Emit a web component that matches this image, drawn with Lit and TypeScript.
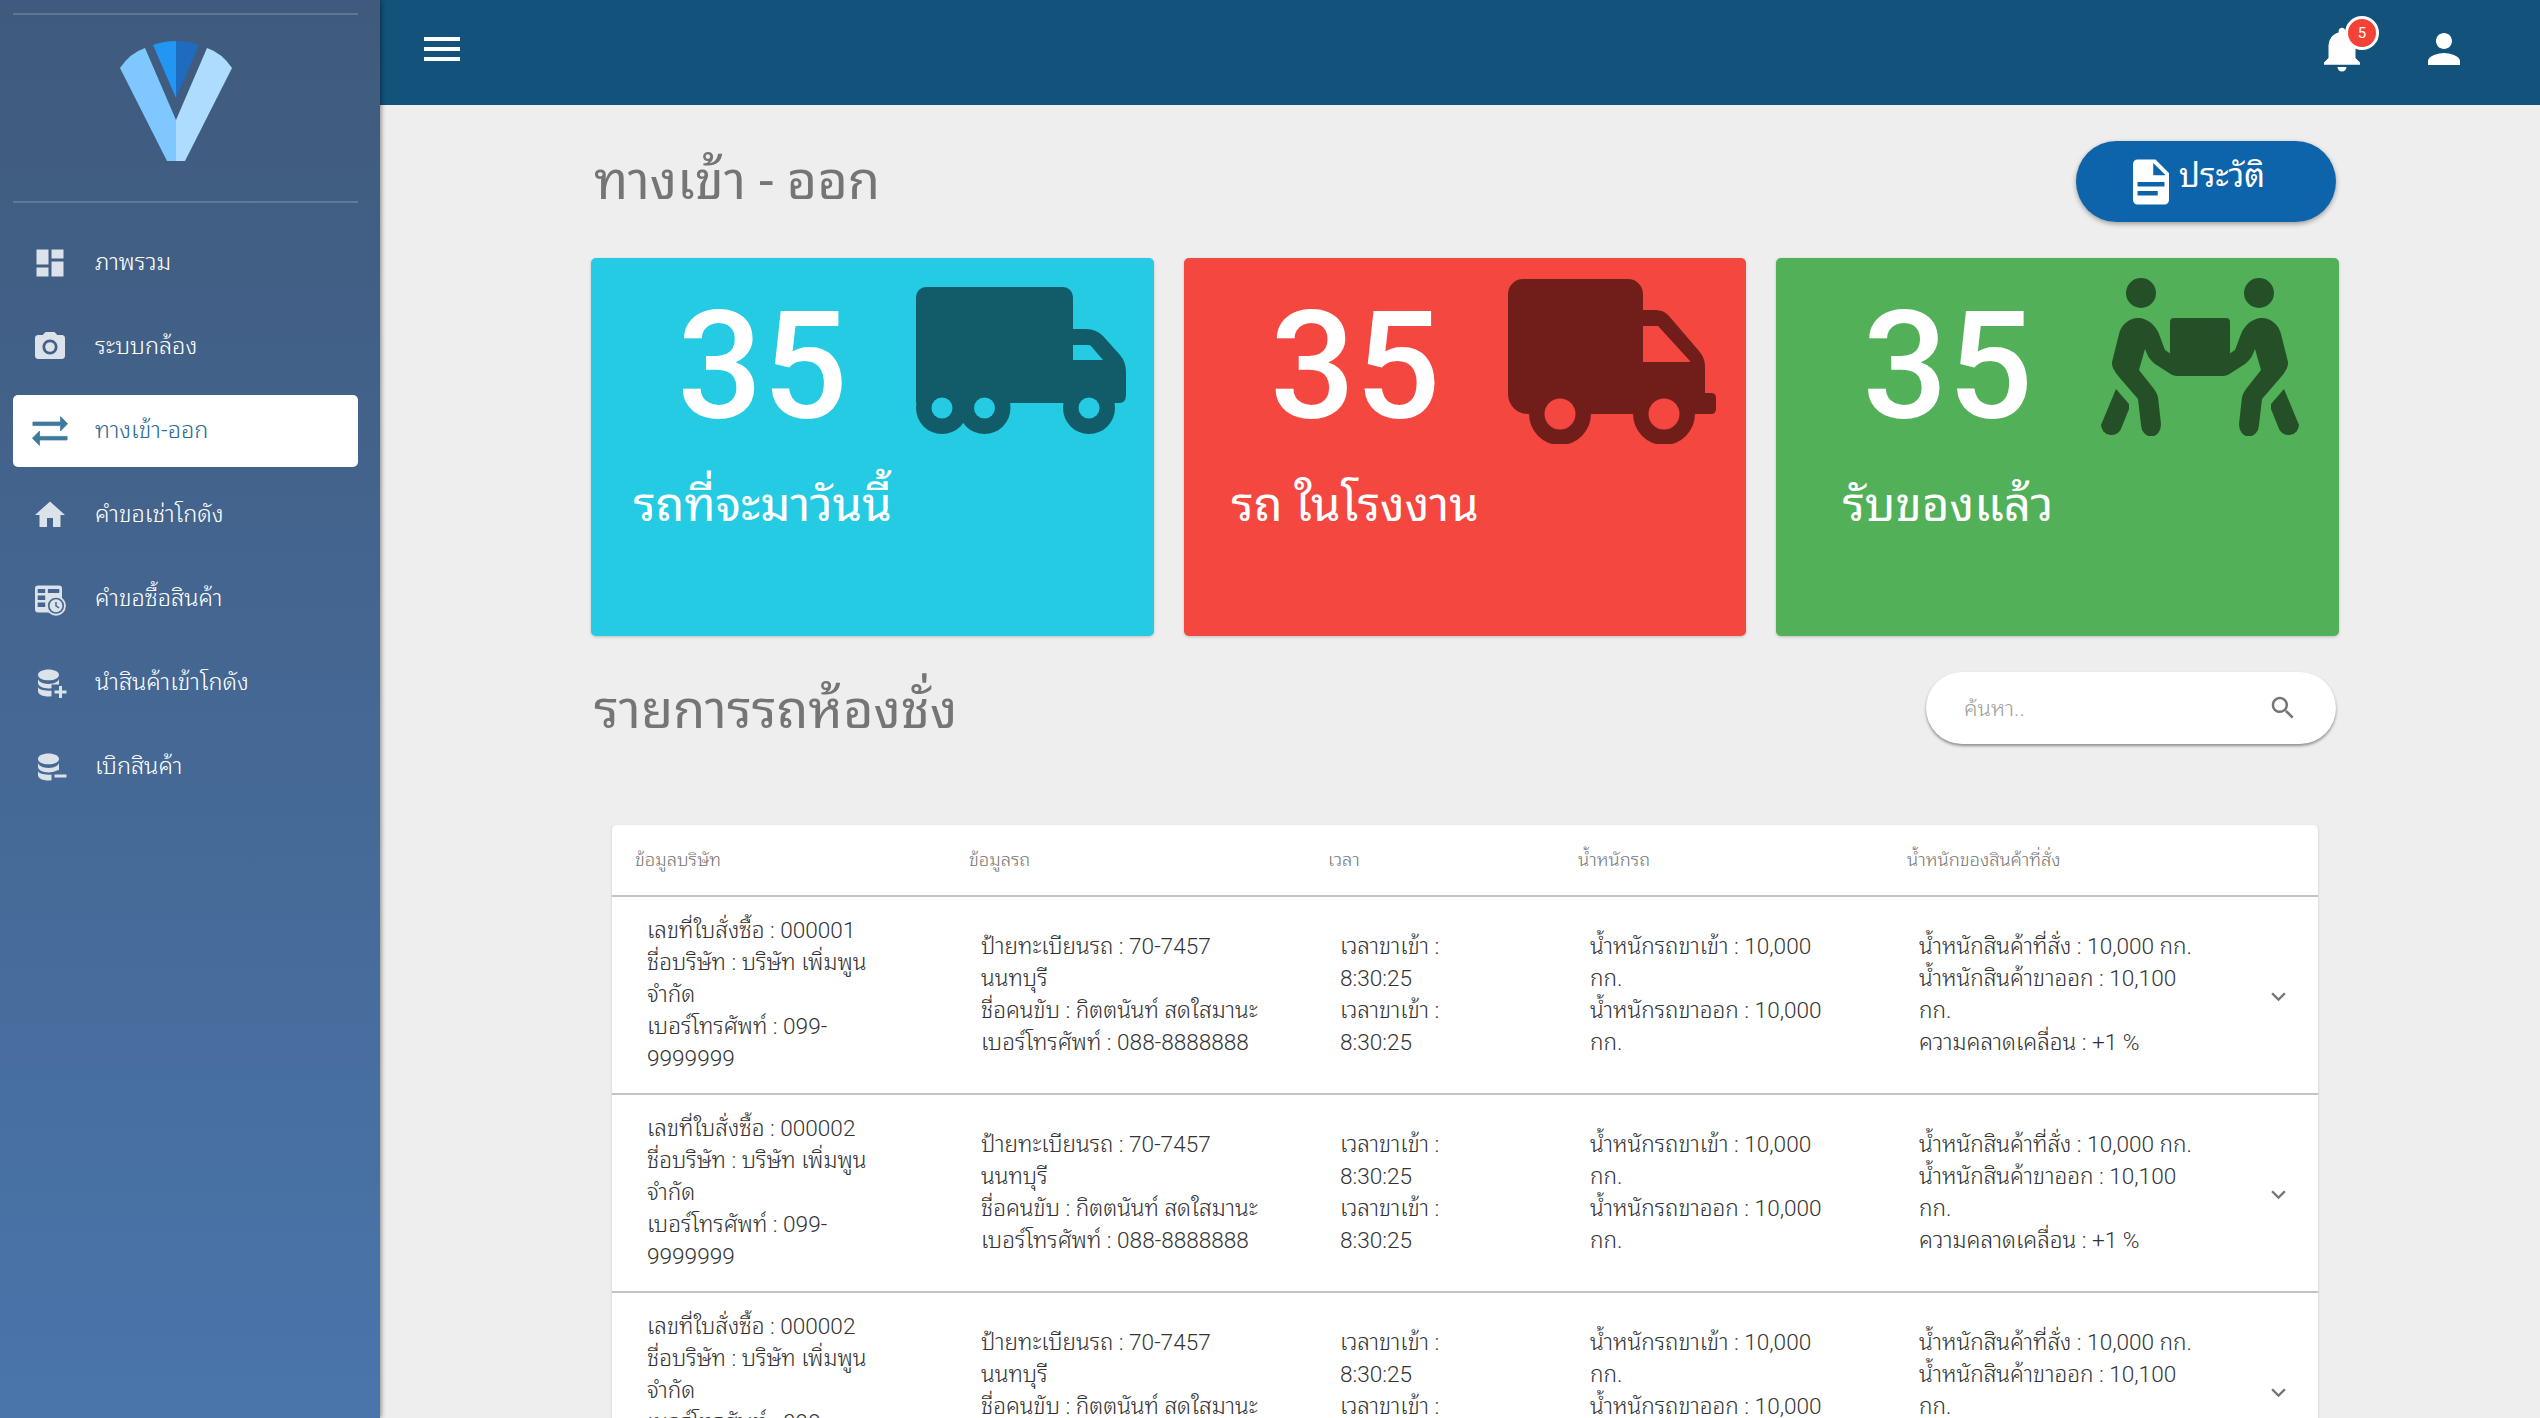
import { LitElement, html, css, svg } from 'lit';
import { customElement, state } from 'lit/decorators.js';

const ICONS: Record<string, unknown> = {
  dashboard: svg`<path d="M3 13h8V3H3v10zm0 8h8v-6H3v6zm10 0h8V11h-8v10zm0-18v6h8V3h-8z" />`,
  camera: svg`<circle cx="12" cy="12" r="3.2" /><path d="M9 2L7.17 4H4c-1.1 0-2 .9-2 2v12c0 1.1.9 2 2 2h16c1.1 0 2-.9 2-2V6c0-1.1-.9-2-2-2h-3.17L15 2H9zm3 15c-2.76 0-5-2.24-5-5s2.24-5 5-5 5 2.24 5 5-2.24 5-5 5z" />`,
  swap: svg`<path stroke="currentColor" stroke-width=".4" stroke-linejoin="round" d="M21.800 8l-4-4v3H2.500v2h15.300v3l4-4zM2.200 16l4 4v-3h15.300v-2H6.200v-3l-4 4z" />`,
  home: svg`<path d="M10 20v-6h4v6h5v-8h3L12 3 2 12h3v8z" />`,
  tableClock: svg`<path fill-rule="evenodd" d="M4 3h14a2 2 0 0 1 2 2v14a2 2 0 0 1-2 2H4a2 2 0 0 1-2-2V5a2 2 0 0 1 2-2zM3.8 5.4v2.6h5V5.4zM10.6 5.4v2.6h7.6V5.4zM3.8 9.6v3h5v-3zM3.8 14.4v3h5v-3z" />
    <circle cx="16" cy="16.5" r="6.6" />
    <circle cx="16" cy="16.5" r="5.4" fill="#456890" />
    <circle cx="16" cy="16.5" r="4.3" />
    <path fill="#456890" d="M15.5 14h1v2.4l1.8 1.1-.5.8-2.3-1.4z" />`,
  dbPlus: svg`<path d="M11 3C7 3 4 4.6 4 6.6s3 3.6 7 3.6 7-1.6 7-3.6S15 3 11 3zM4 9v3c0 2 3 3.6 7 3.6.7 0 1.400-.05 2-.15V13h5v-1.300V9c0 2-3 3.600-7 3.600S4 11 4 9zM4 14.500V17.500c0 2 3 3.500 7 3.500.7 0 1.400-.05 2-.15V17c-.65.1-1.300.1-2 .1-4 0-7-1.100-7-2.600z" /><path d="M18 14h2v3h3v2h-3v3h-2v-3h-3v-2h3z" />`,
  dbMinus: svg`<path d="M11 3C7 3 4 4.6 4 6.6s3 3.6 7 3.6 7-1.6 7-3.6S15 3 11 3zM4 9v3c0 2 3 3.6 7 3.6 2 0 3.800-.4 5.100-1.100L18 14V9c0 2-3 3.600-7 3.600S4 11 4 9zM4 14.500V17.500c0 2 3 3.500 7 3.500.7 0 1.400-.05 2-.15V17c-.65.1-1.300.1-2 .1-4 0-7-1.100-7-2.600z" /><path d="M15 17h8v2h-8z" />`,
};

const NAV = [
  { icon: 'dashboard', label: 'ภาพรวม' },
  { icon: 'camera', label: 'ระบบกล้อง' },
  { icon: 'swap', label: 'ทางเข้า-ออก', active: true, box: '2 2 20 20' },
  { icon: 'home', label: 'คำขอเช่าโกดัง' },
  { icon: 'tableClock', label: 'คำขอซื้อสินค้า' },
  { icon: 'dbPlus', label: 'นำสินค้าเข้าโกดัง' },
  { icon: 'dbMinus', label: 'เบิกสินค้า' },
];

const COLUMNS = ['ข้อมูลบริษัท', 'ข้อมูลรถ', 'เวลา', 'น้ำหนักรถ', 'น้ำหนักของสินค้าที่สั่ง'];

const ORDERS = ['000001', '000002', '000002'];

// lines are broken by hand, same wrap as the column widths give in the reference
const rowCells = (order: string) => [
  [`เลขที่ใบสั่งซื้อ : ${order}`, 'ชื่อบริษัท : บริษัท เพิ่มพูน', 'จำกัด', 'เบอร์โทรศัพท์ : 099-', '9999999'],
  ['ป้ายทะเบียนรถ : 70-7457', 'นนทบุรี', 'ชื่อคนขับ : กิตตนันท์ สดใสมานะ', 'เบอร์โทรศัพท์ : 088-8888888'],
  ['เวลาขาเข้า :', '8:30:25', 'เวลาขาเข้า :', '8:30:25'],
  ['น้ำหนักรถขาเข้า : 10,000', 'กก.', 'น้ำหนักรถขาออก : 10,000', 'กก.'],
  ['น้ำหนักสินค้าที่สั่ง : 10,000 กก.', 'น้ำหนักสินค้าขาออก : 10,100', 'กก.', 'ความคลาดเคลื่อน : +1 %'],
];

const truckLong = html`<svg class="stat-icon truck-long" viewBox="0 0 210 147">
  <path fill="#115c68" d="M10 0H147a10 10 0 0 1 10 10V42H170q10 0 17 7L204 68q6 7 6 17V108q0 8-7 8H0V10A10 10 0 0 1 10 0z" />
  <path fill="#24cbe3" d="M157 58H172q2 0 3 1L187 73H157z" />
  <circle cx="26" cy="121" r="26" fill="#115c68" />
  <circle cx="68.500" cy="121" r="26" fill="#115c68" />
  <circle cx="173" cy="121" r="26" fill="#115c68" />
  <circle cx="26" cy="121" r="10.500" fill="#24cbe3" />
  <circle cx="68.500" cy="121" r="10.500" fill="#24cbe3" />
  <circle cx="173" cy="121" r="10.500" fill="#24cbe3" />
</svg>`;

const truckShort = html`<svg class="stat-icon truck-short" viewBox="0 0 208 165">
  <path fill="#711e1b" d="M15 0H120a15 15 0 0 1 15 15V31H148q8 0 13 6L191 72q6 7 6 15V114H203q5 0 5 5V130q0 5-5 5H20A20 20 0 0 1 0 115V15A15 15 0 0 1 15 0z" />
  <path fill="#f44740" d="M135 47H150L182 82V83H135z" />
  <circle cx="52" cy="135" r="31" fill="#711e1b" />
  <circle cx="156" cy="135" r="31" fill="#711e1b" />
  <circle cx="52" cy="135" r="15.500" fill="#f44740" />
  <circle cx="156" cy="135" r="15.500" fill="#f44740" />
</svg>`;

const carrierHalf = svg`<ellipse cx="40" cy="15" rx="15" ry="15" />
  <path d="M37 40C47 40 55 48 58 56L64 72L70 76H99V98H75Q72 98 68 95L54 86Q48 81 46 76L44 71L38 92L53 111Q56 115 57 119L60 146A10 12 0 0 1 40 147L37 121L18 99Q10 90 11 84L18 56C20 47 28 40 37 40z" />
  <path d="M15 111L28 126V131L20 151A10.500 10.500 0 0 1 0 147z" />`;

const carriers = html`<svg class="stat-icon carriers" viewBox="0 0 198 158" fill="#255027">
  <g>${carrierHalf}</g>
  <g transform="translate(198 0) scale(-1 1)">${carrierHalf}</g>
  <rect x="69" y="40" width="60" height="50" rx="4" />
</svg>`;

const STATS = [
  { value: 35, label: 'รถที่จะมาวันนี้', tone: 'cyan', icon: truckLong },
  { value: 35, label: 'รถ ในโรงงาน', tone: 'red', icon: truckShort },
  { value: 35, label: 'รับของแล้ว', tone: 'green', icon: carriers },
];

@customElement('app-root')
export class AppRoot extends LitElement {
  @state() private search = '';

  static styles = css`
    :host {
      display: flex;
      height: 100vh;
      overflow: hidden;
      background: #eeeeee;
      font-family: Roboto, 'Noto Sans Thai Looped', sans-serif;
      color: rgba(0, 0, 0, 0.87);
    }
    .sidebar {
      flex: 0 0 380px;
      box-sizing: border-box;
      padding: 13px 22px 0 13px;
      background: linear-gradient(180deg, #3f5a7c 0%, #4a75ab 100%);
      box-shadow: 1px 0 5px rgba(0, 0, 0, 0.45);
      position: relative;
      z-index: 2;
    }
    .rule {
      height: 2px;
      background: rgba(255, 255, 255, 0.17);
    }
    .logo {
      display: block;
      height: 186px;
      width: 345px;
    }
    .nav {
      display: flex;
      flex-direction: column;
      gap: 12px;
      margin-top: 24px;
    }
    .nav-item {
      display: flex;
      align-items: center;
      gap: 27px;
      height: 72px;
      padding-left: 19px;
      border-radius: 5px;
      color: #fff;
      font-size: 23.500px;
      font-weight: 300;
    }
    .nav-item span {
      padding-bottom: 7px;
    }
    .nav-item svg {
      width: 36px;
      height: 36px;
      fill: #dbe2ea;
      color: #dbe2ea;
      flex: none;
    }
    .nav-item.active {
      background: #fff;
      color: #2a6a92;
    }
    .nav-item.active svg {
      fill: #3f7a9c;
      color: #3f7a9c;
    }
    .main {
      flex: 1;
      min-width: 0;
      display: flex;
      flex-direction: column;
    }
    .topbar {
      flex: 0 0 105px;
      display: flex;
      align-items: center;
      background: #12527b;
      padding: 0 72px 8px 38px;
      box-sizing: border-box;
      color: #fff;
    }
    .topbar svg {
      fill: #fff;
      display: block;
    }
    .menu {
      width: 48px;
      height: 48px;
    }
    .spacer {
      flex: 1;
    }
    .bell {
      position: relative;
      margin-right: 51px;
    }
    .bell svg {
      width: 54px;
      height: 54px;
    }
    .badge {
      position: absolute;
      top: -6px;
      right: -10px;
      width: 28px;
      height: 28px;
      border: 3px solid #fff;
      border-radius: 50%;
      background: #f44336;
      display: flex;
      align-items: center;
      justify-content: center;
      font-size: 15px;
    }
    .avatar {
      width: 48px;
      height: 48px;
    }
    .content {
      margin-left: 211px;
      width: 1748px;
      padding-top: 36px;
    }
    .title-row {
      display: flex;
      align-items: center;
      justify-content: space-between;
      height: 81px;
      padding: 0 3px;
    }
    .title {
      margin: 0;
      font-size: 52.500px;
      font-weight: 400;
      color: #757575;
      padding-bottom: 14px;
    }
    .list-row .title {
      padding-bottom: 8px;
    }
    .history {
      display: flex;
      align-items: center;
      justify-content: center;
      gap: 4px;
      width: 260px;
      height: 81px;
      padding: 0 14px 0 0;
      border: 0;
      border-radius: 41px;
      background: #0e64aa;
      color: #fff;
      font: 400 32.500px Roboto, 'Noto Sans Thai Looped', sans-serif;
      box-shadow: 0 2px 5px rgba(0, 0, 0, 0.35);
    }
    .history svg {
      width: 54px;
      height: 54px;
      fill: #fff;
      margin: 0 -9px;
    }
    .history span {
      margin-top: -20px;
      margin-left: 6px;
    }
    .stats {
      display: grid;
      grid-template-columns: repeat(3, 1fr);
      gap: 30px;
      margin-top: 36px;
    }
    .stat {
      position: relative;
      height: 378px;
      border-radius: 5px;
      color: #fff;
      box-shadow: 0 1px 3px rgba(0, 0, 0, 0.2);
    }
    .stat.cyan {
      background: #24cbe3;
    }
    .stat.red {
      background: #f44740;
    }
    .stat.green {
      background: #52b058;
    }
    .stat-text {
      width: 343px;
      display: flex;
      flex-direction: column;
      align-items: center;
    }
    .stat-value {
      font-size: 150px;
      font-weight: 500;
      line-height: 182px;
      margin-top: 18px;
    }
    .stat-label {
      font-size: 47.500px;
      line-height: 72px;
      margin-top: 11px;
    }
    .stat-icon {
      position: absolute;
      display: block;
    }
    .truck-long {
      left: 325px;
      top: 29px;
      width: 210px;
      height: 147px;
    }
    .truck-short {
      left: 324px;
      top: 21px;
      width: 208px;
      height: 165px;
    }
    .carriers {
      left: 325px;
      top: 20px;
      width: 198px;
      height: 158px;
    }
    .list-row {
      display: flex;
      align-items: center;
      justify-content: space-between;
      height: 72px;
      margin-top: 36px;
      padding: 0 3px;
    }
    .search {
      box-sizing: border-box;
      display: flex;
      align-items: center;
      width: 410px;
      height: 72px;
      padding: 0 38px 0 36px;
      background: #fff;
      border-radius: 36px;
      box-shadow: 0 2px 3px rgba(0, 0, 0, 0.4);
    }
    .search input {
      flex: 1;
      min-width: 0;
      border: 0;
      outline: 0;
      background: none;
      font: 300 22px Roboto, 'Noto Sans Thai Looped', sans-serif;
    }
    .search input::placeholder {
      color: #9e9e9e;
    }
    .search svg {
      width: 30px;
      height: 30px;
      fill: #757575;
    }
    .table {
      margin: 81px 21px 0;
      background: #fff;
      border-radius: 5px 5px 0 0;
      box-shadow: 0 1px 3px rgba(0, 0, 0, 0.15);
    }
    .head,
    .row {
      display: grid;
      grid-template-columns: 334px 359px 250px 329px 354px 80px;
      align-items: center;
      border-bottom: 2px solid #c4c4c4;
      box-sizing: border-box;
    }
    .head {
      height: 72px;
      font-size: 18.400px;
      font-weight: 300;
      color: #757575;
    }
    .head div {
      padding: 0 0 6px 23px;
    }
    .row {
      height: 198px;
      font-size: 22.600px;
      font-weight: 300;
      line-height: 32px;
      color: #333;
    }
    .cell {
      padding-left: 35px;
      white-space: nowrap;
    }
    .chevron {
      justify-self: center;
      width: 29px;
      height: 29px;
      margin-top: 2px;
      fill: #757575;
    }
  `;

  render() {
    return html`
      <aside class="sidebar">
        <div class="rule"></div>
        <svg class="logo" viewBox="0 0 345 186">
          <path fill="#7fc7ff" d="M107 53Q117 38 132 33L163 105V146H154L107 53z" />
          <path fill="#aedcff" d="M219 53Q209 38 194 33L163 105V146H172L219 53z" />
          <path fill="#2196f3" d="M140 30Q151 26 163 26V83z" />
          <path fill="#1f6bc0" d="M186 30Q175 26 163 26V83z" />
        </svg>
        <div class="rule"></div>
        <nav class="nav">
          ${NAV.map(
            (item) => html`<div class="nav-item ${item.active ? 'active' : ''}">
              <svg viewBox=${item.box ?? '0 0 24 24'}>${ICONS[item.icon]}</svg>
              <span>${item.label}</span>
            </div>`
          )}
        </nav>
      </aside>
      <div class="main">
        <header class="topbar">
          <svg class="menu" viewBox="0 0 24 24"><path d="M3 18h18v-2H3v2zm0-5h18v-2H3v2zm0-7v2h18V6H3z" /></svg>
          <div class="spacer"></div>
          <div class="bell">
            <svg viewBox="0 0 24 24"><path d="M12 22c1.100 0 2-.9 2-2h-4c0 1.100.89 2 2 2zm6-6v-5c0-3.070-1.640-5.640-4.500-6.320V4c0-.83-.67-1.500-1.500-1.500s-1.500.67-1.500 1.500v.68C7.630 5.360 6 7.920 6 11v5l-2 2v1h16v-1l-2-2z" /></svg>
            <span class="badge">5</span>
          </div>
          <svg class="avatar" viewBox="0 0 24 24"><path d="M12 12c2.210 0 4-1.790 4-4s-1.790-4-4-4-4 1.790-4 4 1.790 4 4 4zm0 2c-2.670 0-8 1.340-8 4v2h16v-2c0-2.660-5.330-4-8-4z" /></svg>
        </header>
        <main class="content">
          <div class="title-row">
            <h1 class="title">ทางเข้า - ออก</h1>
            <button class="history">
              <svg viewBox="0 0 24 24"><path fill-rule="evenodd" d="M14 2H6c-1.100 0-1.990.9-1.990 2L4 20c0 1.100.89 2 1.990 2H18c1.100 0 2-.9 2-2V8l-6-6zM18 14H6v-2h12v2zM15 18H6v-2h9v2zM13 9V3.500L18.500 9H13z" /></svg>
              <span>ประวัติ</span>
            </button>
          </div>
          <section class="stats">
            ${STATS.map(
              (s) => html`<div class="stat ${s.tone}">
                <div class="stat-text">
                  <div class="stat-value">${s.value}</div>
                  <div class="stat-label">${s.label}</div>
                </div>
                ${s.icon}
              </div>`
            )}
          </section>
          <div class="list-row">
            <h2 class="title">รายการรถห้องชั่ง</h2>
            <label class="search">
              <input
                placeholder="ค้นหา.."
                .value=${this.search}
                @input=${(e: Event) => (this.search = (e.target as HTMLInputElement).value)}
              />
              <svg viewBox="0 0 24 24"><path d="M15.500 14h-.79l-.28-.27C15.410 12.590 16 11.110 16 9.500 16 5.910 13.090 3 9.500 3S3 5.910 3 9.500 5.910 16 9.500 16c1.610 0 3.090-.59 4.230-1.570l.27.28v.79l5 4.990L20.490 19l-4.990-5zm-6 0C7.010 14 5 11.990 5 9.500S7.010 5 9.500 5 14 7.010 14 9.500 11.990 14 9.500 14z" /></svg>
            </label>
          </div>
          <section class="table">
            <div class="head">
              ${COLUMNS.map((c) => html`<div>${c}</div>`)}
            </div>
            ${ORDERS.map(
              (order) => html`<div class="row">
                ${rowCells(order).map(
                  (lines) => html`<div class="cell">${lines.map((l) => html`<div>${l}</div>`)}</div>`
                )}
                <svg class="chevron" viewBox="0 0 24 24"><path d="M16.590 8.590L12 13.170 7.410 8.590 6 10l6 6 6-6z" /></svg>
              </div>`
            )}
          </section>
        </main>
      </div>
    `;
  }
}

declare global {
  interface HTMLElementTagNameMap {
    'app-root': AppRoot;
  }
}
